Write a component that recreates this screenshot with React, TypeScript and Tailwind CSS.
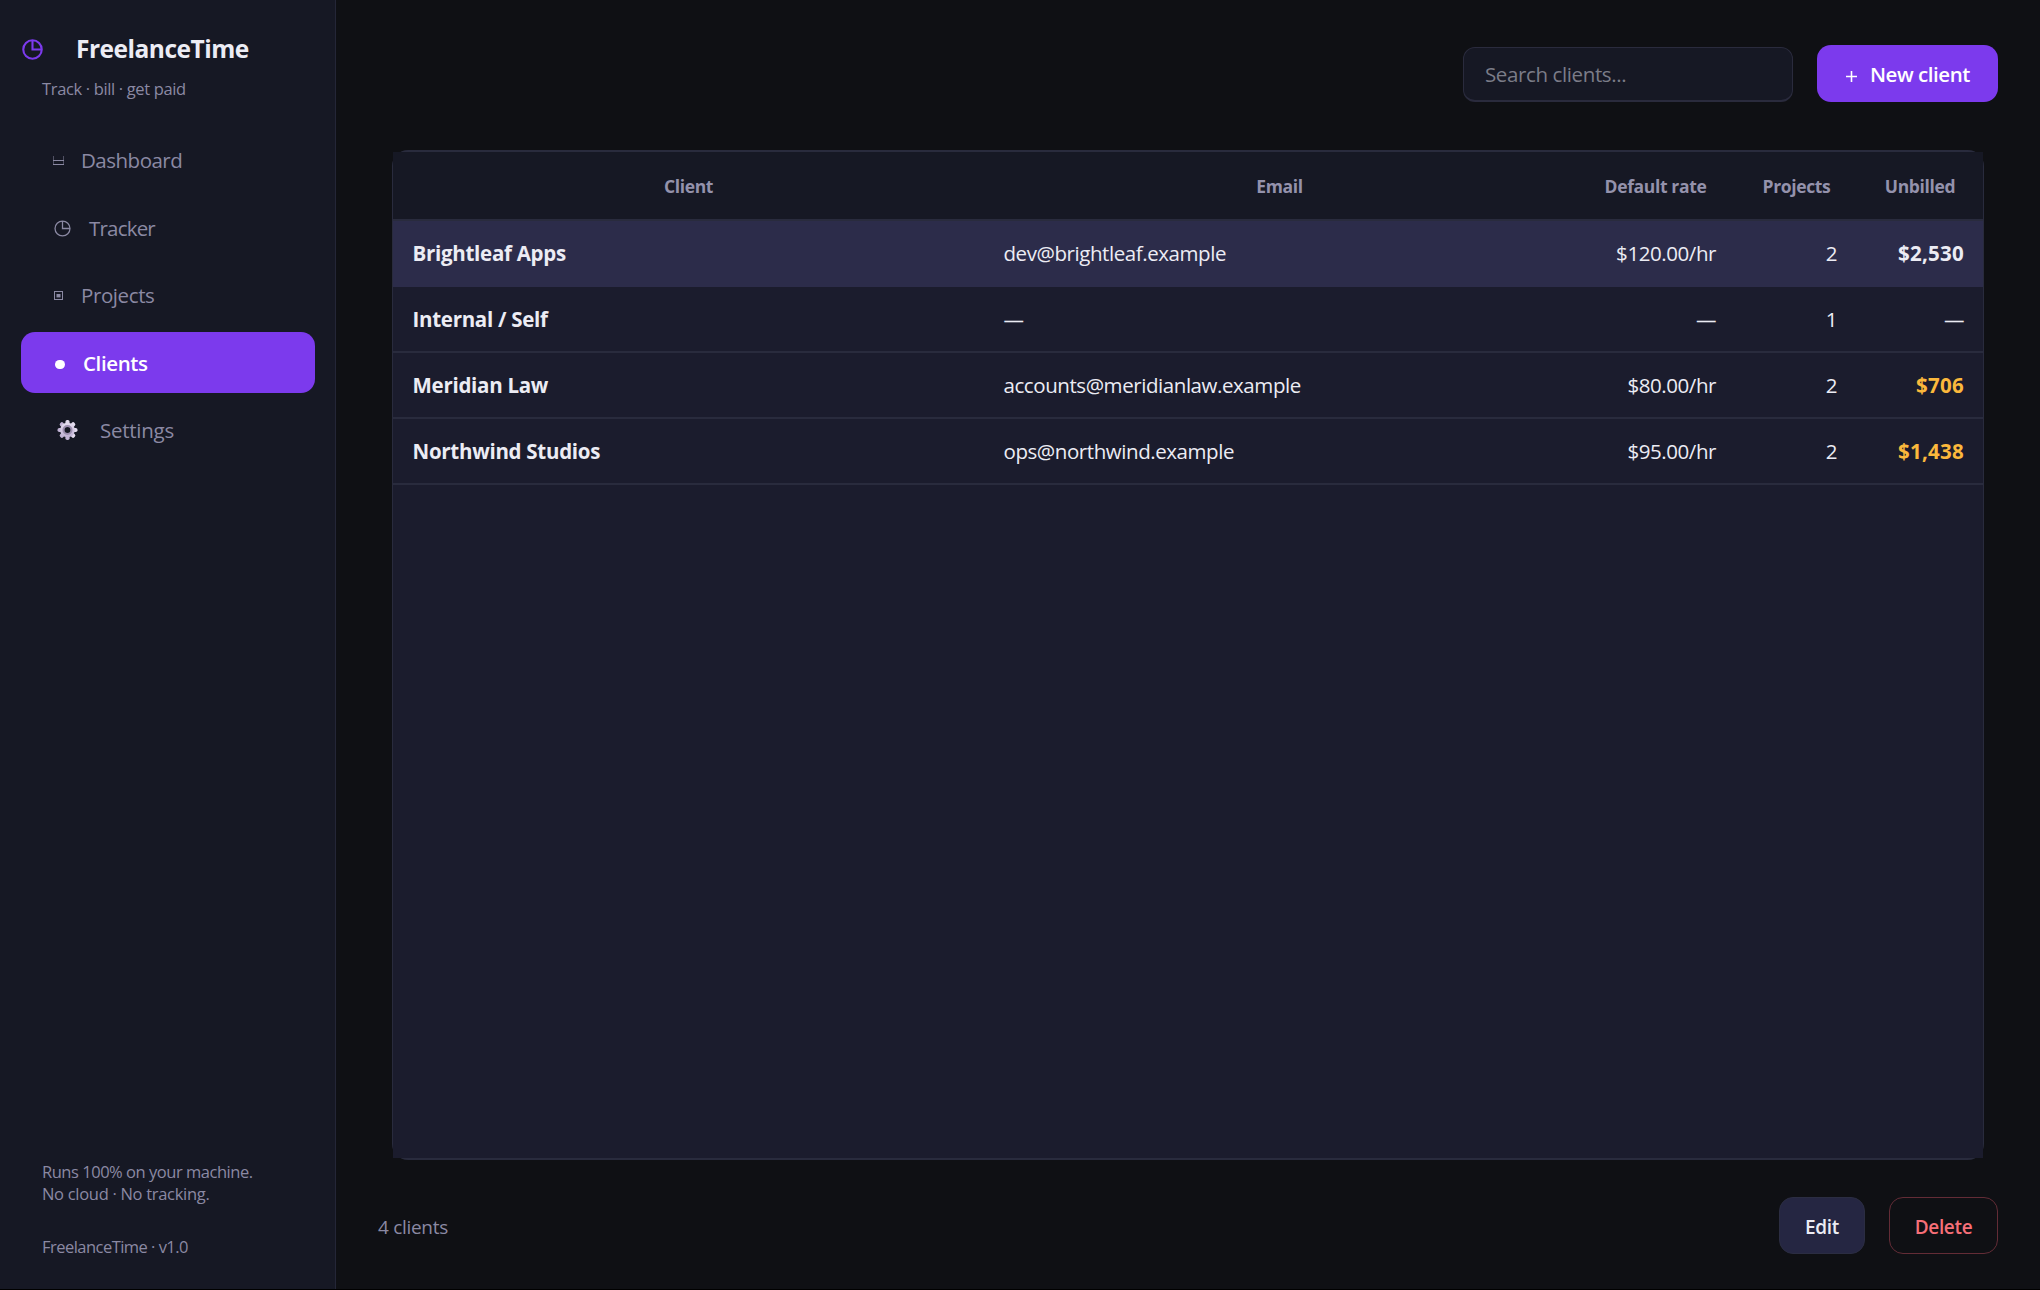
import React, { useState } from 'react';

interface Client {
  name: string;
  email: string;
  rate: string;
  projects: number;
  unbilled: string;
}

const clients: Client[] = [
  { name: 'Brightleaf Apps', email: 'dev@brightleaf.example', rate: '$120.00/hr', projects: 2, unbilled: '$2,530' },
  { name: 'Internal / Self', email: '—', rate: '—', projects: 1, unbilled: '—' },
  { name: 'Meridian Law', email: 'accounts@meridianlaw.example', rate: '$80.00/hr', projects: 2, unbilled: '$706' },
  { name: 'Northwind Studios', email: 'ops@northwind.example', rate: '$95.00/hr', projects: 2, unbilled: '$1,438' },
];

function ClockIcon({ className, stroke }: { className: string; stroke: number }) {
  return (
    <svg viewBox="0 0 20 20" className={className} fill="none" stroke="currentColor" strokeWidth={stroke}>
      <circle cx="10" cy="10" r="8.8" />
      <path d="M10 1.2V10H18.8" />
    </svg>
  );
}

function DashboardIcon() {
  return (
    <svg viewBox="0 0 11 9" className="h-[9px] w-[11px]" fill="currentColor" shapeRendering="crispEdges">
      <rect x="0" y="0" width="1" height="9" opacity="0.5" />
      <rect x="10" y="0" width="1" height="9" opacity="0.5" />
      <rect x="0" y="4" width="11" height="1" />
      <rect x="0" y="8" width="11" height="1" />
    </svg>
  );
}

function ProjectsIcon() {
  return (
    <svg viewBox="0 0 9 9" className="h-[9px] w-[9px]">
      <rect x="0.5" y="0.5" width="8" height="8" fill="none" stroke="currentColor" />
      <rect x="2.5" y="3" width="4" height="3.4" fill="currentColor" />
    </svg>
  );
}

function GearIcon() {
  return (
    <svg viewBox="0 0 20 20" className="h-5 w-[21px]">
      <defs>
        <linearGradient id="gear" x1="0" y1="0" x2="0" y2="1">
          <stop offset="0" stopColor="#e6dff0" />
          <stop offset="1" stopColor="#bfb0d3" />
        </linearGradient>
      </defs>
      <g fill="url(#gear)">
        {[0, 45, 90, 135].map((a) => (
          <rect key={a} x="7.9" y="0" width="4.2" height="20" rx="1.8" transform={`rotate(${a} 10 10)`} />
        ))}
        <circle cx="10" cy="10" r="7.3" />
      </g>
      <circle cx="10" cy="10" r="4" fill="none" stroke="#9d8fb0" strokeWidth="2" />
      <circle cx="10" cy="10" r="3" fill="#161824" />
    </svg>
  );
}

const navItems = [
  { label: 'Dashboard', icon: <DashboardIcon />, pad: 'pl-8', gap: 'w-7', track: 'tracking-[-0.5px]' },
  { label: 'Tracker', icon: <ClockIcon className="mt-px h-[17px] w-[17px]" stroke={1.5} />, pad: 'pl-[33px]', gap: 'w-[35px]', track: 'tracking-[-0.8px]' },
  { label: 'Projects', icon: <ProjectsIcon />, pad: 'pl-[33px]', gap: 'w-[27px]', track: 'tracking-[-0.4px]' },
  { label: 'Clients', icon: <span className="mt-1 block h-[9.5px] w-[9.5px] rounded-full bg-white" />, pad: 'pl-[34px]', gap: 'w-7', track: 'tracking-[-0.4px]' },
  { label: 'Settings', icon: <GearIcon />, pad: 'pl-9', gap: 'w-[43px]', track: 'tracking-[-0.25px]' },
];

function Sidebar({ active, onSelect }: { active: string; onSelect: (label: string) => void }) {
  return (
    <aside className="flex h-full w-[336px] shrink-0 flex-col border-r border-[#242637] bg-[#161824]">
      <div className="mt-[34px] flex h-[30px] items-center pl-[22px]">
        <ClockIcon className="h-[21px] w-[21px] text-[#7c3aed]" stroke={2} />
        <h1 className="ml-[33px] text-[24.5px] leading-[30px] font-bold tracking-[-0.5px] text-[#ececf4]">FreelanceTime</h1>
      </div>
      <p className="mt-[13px] pl-[42px] text-[16.5px] leading-6 tracking-[-0.35px] text-[#8b89a3]">Track · bill · get paid</p>

      <nav className="mt-7 flex flex-col gap-[6.5px] pr-5 pl-[21px]">
        {navItems.map((item) => {
          const isActive = item.label === active;
          return (
            <button
              key={item.label}
              onClick={() => onSelect(item.label)}
              className={`flex h-[61px] w-full items-center rounded-[14px] pt-px text-left ${item.pad} ${
                isActive ? 'bg-[#7c3aed] font-semibold text-white' : 'text-[#8b89a3]'
              }`}
            >
              <span className={`flex shrink-0 ${item.gap}`}>{item.icon}</span>
              <span className={`text-[20.5px] leading-7 ${item.track}`}>{item.label}</span>
            </button>
          );
        })}
      </nav>

      <div className="mt-auto pb-[31px] pl-[42px] text-[16.5px] leading-[22px] tracking-[-0.47px] text-[#8b89a3]">
        <p>Runs 100% on your machine.</p>
        <p className="tracking-[-0.3px]">No cloud · No tracking.</p>
        <p className="mt-[31px] tracking-[-0.53px]">FreelanceTime · v1.0</p>
      </div>
    </aside>
  );
}

const columns = 'grid grid-cols-[591px_591px_161px_121px_126px]';

function ClientTable({ rows, selected, onSelect }: { rows: Client[]; selected: number; onSelect: (i: number) => void }) {
  return (
    <div className="h-[1010px] w-[1592px] rounded-[16px] border-x border-y-2 border-[#292b3d]">
      <div className="h-full w-full bg-[#1b1c2d]">
        <div className={`${columns} h-[69px] border-b-2 border-[#292b3d] bg-[#161824] pt-[22px] text-center text-[17.5px] leading-6 font-bold tracking-[-0.36px] text-[#9492ac]`}>
          <span>Client</span>
          <span>Email</span>
          <span>Default rate</span>
          <span>Projects</span>
          <span>Unbilled</span>
        </div>
        {rows.map((row, i) => {
          const isSelected = i === selected;
          const hasUnbilled = row.unbilled !== '—';
          return (
            <div
              key={row.name}
              onClick={() => onSelect(i)}
              className={`${columns} h-[66px] cursor-default items-center border-b-2 text-[20.5px] leading-7 tracking-[-0.43px] text-[#ececf4] ${
                isSelected ? 'border-[#2c2c4a] bg-[#2c2c4a]' : 'border-[#292b3d]'
              }`}
            >
              <span className="pl-[19.5px] font-bold tracking-[-0.28px]">{row.name}</span>
              <span className="pl-[19.5px]">{row.email}</span>
              <span className="pr-5 text-right">{row.rate}</span>
              <span className="pr-5 text-right">{row.projects}</span>
              <span
                className={`pr-[19px] text-right ${hasUnbilled ? 'font-bold tracking-[0.25px]' : ''} ${
                  hasUnbilled && !isSelected ? 'text-[#fbb83c]' : ''
                }`}
              >
                {row.unbilled}
              </span>
            </div>
          );
        })}
      </div>
    </div>
  );
}

export default function App() {
  const [page, setPage] = useState('Clients');
  const [query, setQuery] = useState('');
  const [selected, setSelected] = useState(0);

  const rows = clients.filter((c) => c.name.toLowerCase().includes(query.toLowerCase()));

  return (
    <div className="flex h-[1290px] w-[2040px] overflow-hidden border-b border-black bg-[#0f1014] font-['Open_Sans',sans-serif]">
      <Sidebar active={page} onSelect={setPage} />
      <main className="flex flex-1 flex-col">
        <div className="mt-[45px] flex h-[57px] items-end justify-end gap-6 pr-[42px]">
          <input
            type="text"
            placeholder="Search clients..."
            value={query}
            onChange={(e) => setQuery(e.target.value)}
            className="h-[55px] w-[330px] rounded-[12px] border border-b-2 border-[#2a2b3d] bg-[#161824] px-[21px] text-[20.5px] tracking-[-0.38px] text-[#ececf4] placeholder:text-[#7b7c88] focus:outline-none"
          />
          <button className="flex h-[57px] w-[181px] items-center rounded-[14px] bg-[#7c3aed] pt-0.5 pl-[29px] text-[20.5px] font-semibold text-white">
            <svg viewBox="0 0 11 11" className="mt-[3px] mr-[13px] h-[11px] w-[11px]" stroke="currentColor" strokeWidth="1.6">
              <path d="M5.5 0V11M0 5.5H11" />
            </svg>
            <span className="tracking-[-0.45px]">New client</span>
          </button>
        </div>

        <div className="mt-12 pl-14">
          <ClientTable rows={rows} selected={selected} onSelect={setSelected} />
        </div>

        <div className="mt-[37px] flex h-[57px] items-center pr-[42px] pl-[42px]">
          <p className="flex-1 pt-[3px] text-[19px] tracking-[-0.3px] text-[#8b89a3]">4 clients</p>
          <button className="h-[57px] w-[86px] rounded-[14px] border-[1.5px] border-[#2b2d42] bg-[#252642] pt-1 text-[19px] font-semibold tracking-[-0.35px] text-[#ececf4]">
            Edit
          </button>
          <button className="ml-6 h-[57px] w-[109px] rounded-[14px] border-[1.5px] border-[#632c36] pt-1 text-[19px] font-semibold tracking-[-0.35px] text-[#f66f78]">
            Delete
          </button>
        </div>
      </main>
    </div>
  );
}
